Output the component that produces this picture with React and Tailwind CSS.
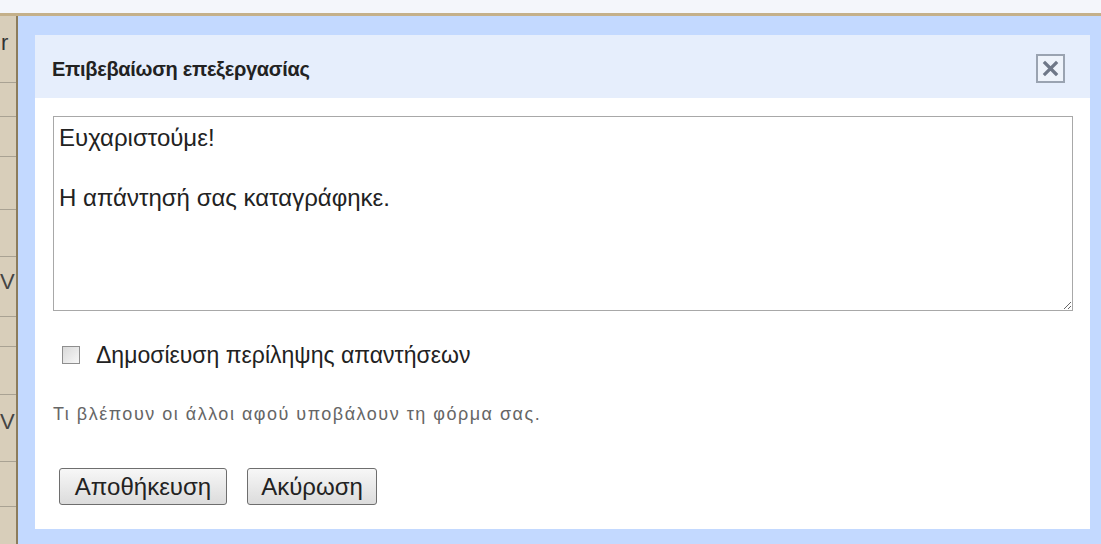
import React from "react";

function CloseIcon() {
  return (
    <div className="w-[29px] h-[29px] border-2 border-[#9aa3b1] flex items-center justify-center bg-[#eef3fb]">
      <svg width="17" height="17" viewBox="0 0 17 17">
        <path d="M3 3 L14 14 M14 3 L3 14" stroke="#6f7888" strokeWidth="3.2" strokeLinecap="square" />
      </svg>
    </div>
  );
}

function SideStrip() {
  const lines = [66, 100, 140, 193, 240, 300, 330, 378, 445, 490];
  return (
    <div className="relative w-[16px] shrink-0 bg-[#d8ceba]">
      {lines.map((y) => (
        <div key={y} className="absolute left-0 w-full h-px bg-[#a9a293]" style={{ top: y }} />
      ))}
      <span className="absolute left-[1px] top-[16px] text-[22px] leading-none text-[#333]">r</span>
      <span className="absolute left-[0px] top-[255px] text-[22px] leading-none text-[#444]">V</span>
      <span className="absolute left-[0px] top-[395px] text-[22px] leading-none text-[#444]">V</span>
    </div>
  );
}

export default function App() {
  return (
    <div className="w-[1101px] h-[544px] overflow-hidden bg-white flex flex-col font-['Liberation_Sans',Arial,sans-serif]">
      <div className="h-[13px] shrink-0 bg-[#f4f6fb]" />
      <div className="h-[3px] shrink-0 bg-[#c4b08a]" />
      <div className="flex flex-1 min-h-0">
        <SideStrip />
        <div className="w-[2px] shrink-0 bg-[#8c7c5c]" />
        <div className="flex-1 bg-[#c3d9ff] pt-[19px] pl-[17px] pr-[11px] pb-[15px] flex">
          <div className="flex-1 bg-white flex flex-col">
            <div className="h-[63px] shrink-0 bg-[#e6eefc] flex items-center justify-between pl-[17px] pr-[25px] pt-[4px]">
              <span className="text-[20px] font-bold text-[#222] tracking-[-0.3px]">Επιβεβαίωση επεξεργασίας</span>
              <CloseIcon />
            </div>
            <div className="flex flex-col pl-[18px] pr-[17px] pt-[18px]">
              <textarea
                readOnly
                defaultValue={"Ευχαριστούμε!\n\nΗ απάντησή σας καταγράφηκε."}
                className="h-[195px] w-full border border-[#a8a8a8] px-[5px] pt-[6px] text-[24px] leading-[30px] text-[#222] outline-none resize"
                style={{ fontFamily: "'Liberation Sans', Arial, sans-serif" }}
              />
              <div className="flex items-center h-[20px] mt-[34px] pl-[9px]">
                <div className="w-[18px] h-[18px] border border-[#8e8e8e] bg-gradient-to-br from-[#d9d9d9] to-[#f7f7f7]" />
                <span className="ml-[16px] text-[23px] leading-[20px] text-[#222]">Δημοσίευση περίληψης απαντήσεων</span>
              </div>
              <div className="mt-[39px] h-[20px] text-[18px] leading-[20px] tracking-[1.5px] text-[#666]">
                Τι βλέπουν οι άλλοι αφού υποβάλουν τη φόρμα σας.
              </div>
              <div className="flex gap-[20px] mt-[44px] pl-[6px]">
                <button className="h-[37px] w-[168px] rounded-[3px] border border-[#6e6e6e] bg-gradient-to-b from-[#f7f7f7] to-[#dcdcdc] text-[24px] text-[#222]">
                  Αποθήκευση
                </button>
                <button className="h-[37px] w-[130px] rounded-[3px] border border-[#6e6e6e] bg-gradient-to-b from-[#f7f7f7] to-[#dcdcdc] text-[24px] text-[#222]">
                  Ακύρωση
                </button>
              </div>
            </div>
          </div>
        </div>
      </div>
    </div>
  );
}
